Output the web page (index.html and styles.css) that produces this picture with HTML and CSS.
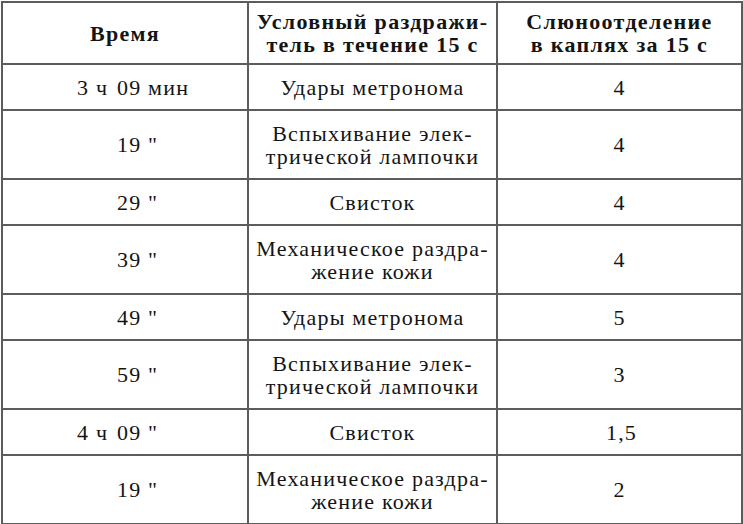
FILE: index.html
```html
<!DOCTYPE html>
<html lang="ru">
<head>
<meta charset="utf-8">
<title>Таблица</title>
<link rel="stylesheet" href="styles.css">
</head>
<body>
<table class="data">
  <colgroup>
    <col class="c1"><col class="c2"><col class="c3">
  </colgroup>
  <thead>
    <tr class="head">
      <th>Время</th>
      <th>Условный раздражи-<br>тель в течение 15 с</th>
      <th>Слюноотделение<br>в каплях за 15 с</th>
    </tr>
  </thead>
  <tbody>
    <tr class="one"><td class="time"><span class="hr">3 ч</span>09 мин</td><td>Удары метронома</td><td>4</td></tr>
    <tr class="two"><td class="time">19 "</td><td>Вспыхивание элек-<br>трической лампочки</td><td>4</td></tr>
    <tr class="one"><td class="time">29 "</td><td>Свисток</td><td>4</td></tr>
    <tr class="two"><td class="time">39 "</td><td>Механическое раздра-<br>жение кожи</td><td>4</td></tr>
    <tr class="one"><td class="time">49 "</td><td>Удары метронома</td><td>5</td></tr>
    <tr class="two"><td class="time">59 "</td><td>Вспыхивание элек-<br>трической лампочки</td><td>3</td></tr>
    <tr class="one"><td class="time"><span class="hr">4 ч</span>09 "</td><td>Свисток</td><td class="num">1,5</td></tr>
    <tr class="two"><td class="time">19 "</td><td>Механическое раздра-<br>жение кожи</td><td>2</td></tr>
  </tbody>
</table>
</body>
</html>
```

FILE: styles.css
```css
html, body {
  margin: 0;
  padding: 0;
  background: #ffffff;
}
body {
  font-family: "Liberation Serif", "DejaVu Serif", serif;
  color: #141414;
}
.data {
  border-collapse: collapse;
  margin: 1px 0 0 1px;
  width: 740px;
  table-layout: fixed;
}
.c1 { width: 246px; }
.c2 { width: 249px; }
.c3 { width: 245px; }
.data th, .data td {
  border: 2px solid #5c5c5c;
  text-align: center;
  vertical-align: middle;
  padding: 0;
}
.data th {
  font-weight: bold;
  font-size: 22px;
  line-height: 23px;
  height: 60px;
  letter-spacing: 1.3px;
}
.data td {
  font-size: 22px;
  line-height: 23px;
  letter-spacing: 1.2px;
}
.data td.time {
  text-align: left;
  padding-left: 114px;
}
.hr {
  display: inline-block;
  width: 40px;
  margin-left: -40px;
  text-align: left;
}
.data td.num {
  padding-left: 4px;
}
.one td { height: 44px; }
.two td { height: 67px; }
```
